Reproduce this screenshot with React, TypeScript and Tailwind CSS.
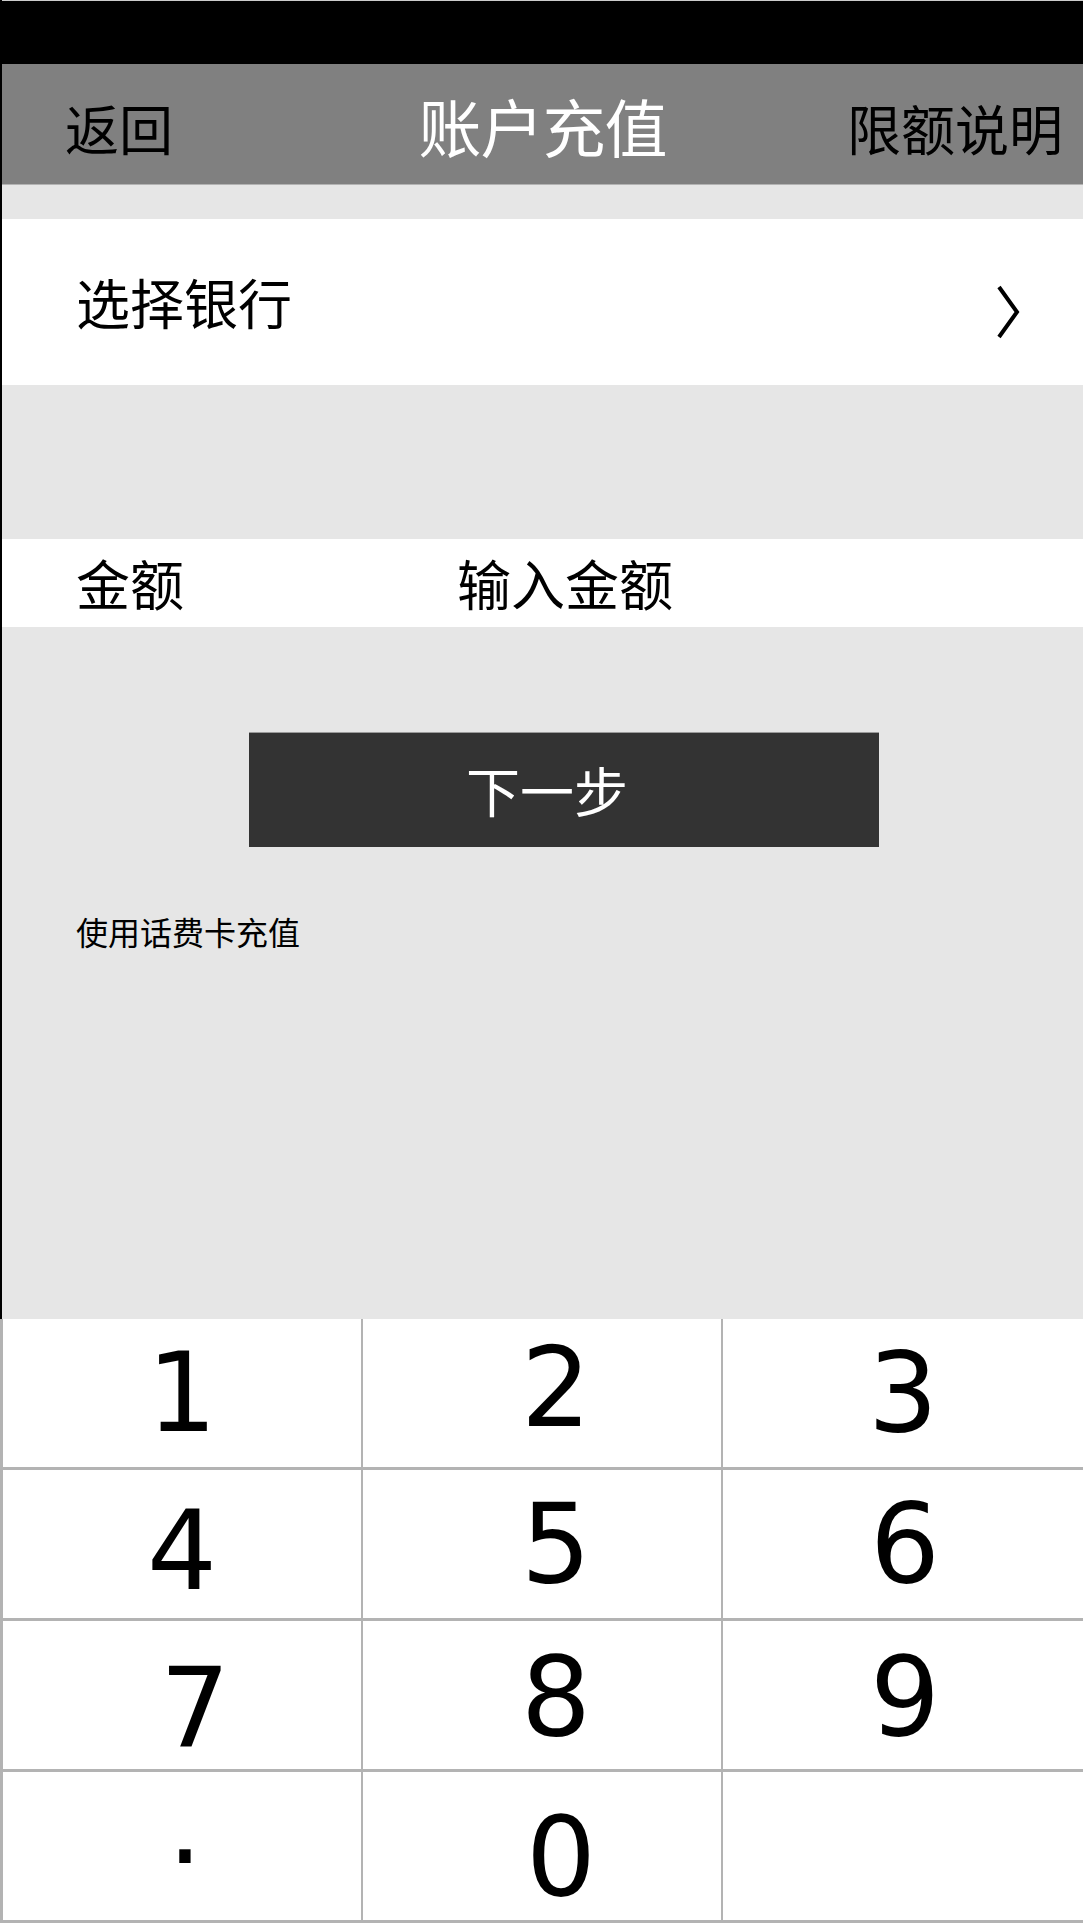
import React from "react";

const keys = [
  { label: "1", className: "" },
  { label: "2", className: "pl-[28px] pb-[10px]" },
  { label: "3", className: "" },
  { label: "4", className: "pt-[14px]" },
  { label: "5", className: "pl-[28px]" },
  { label: "6", className: "pl-[4px]" },
  { label: "7", className: "pl-[26px] pt-[28px]" },
  { label: "8", className: "pl-[28px] pt-[4px]" },
  { label: "9", className: "pl-[4px] pt-[4px]" },
  { label: ".", className: "pl-[6px] pb-[42px]" },
  { label: "0", className: "pl-[38px] pt-[22px]" },
  { label: "", className: "" },
];

const Chevron = () => (
  <svg width="26" height="54" viewBox="0 0 26 54" fill="none">
    <polyline
      points="4,2 22,27 4,52"
      stroke="#000"
      strokeWidth="4"
      strokeLinejoin="miter"
    />
  </svg>
);

const App = () => {
  return (
    <div className="w-[1083px] h-[1923px] flex flex-col bg-[#e6e6e6] font-['Noto_Sans_CJK_SC','Noto_Sans',sans-serif] overflow-hidden">
      <div className="flex flex-col flex-1 border-l-2 border-black">
        {/* status bar */}
        <div className="h-[64px] bg-black border-t border-[#cccccc]" />

        {/* header */}
        <div className="h-[121px] bg-[#808080] border-b border-[#b3b3b3] grid grid-cols-[1fr_auto_1fr] items-center px-[20px]">
          <span className="text-[54px] leading-none text-black pl-[43px] pt-[8px]">返回</span>
          <span className="text-[63px] leading-none text-white tracking-[-1px]">账户充值</span>
          <span className="text-[54px] leading-none text-black text-right pt-[8px]">限额说明</span>
        </div>

        <div className="h-[34px]" />

        {/* bank row */}
        <div className="h-[166px] bg-white flex items-center justify-between pl-[74px] pr-[62px]">
          <span className="text-[54px] leading-none text-black">选择银行</span>
          <div className="pt-[20px]">
            <Chevron />
          </div>
        </div>

        <div className="h-[154px]" />

        {/* amount row */}
        <div className="h-[88px] bg-white flex items-center pl-[74px]">
          <span className="w-[381px] text-[54px] leading-none text-black">金额</span>
          <span className="text-[54px] leading-none text-black">输入金额</span>
        </div>

        {/* actions */}
        <div className="flex-1 flex flex-col">
          <button
            type="button"
            className="mt-[105px] ml-[247px] w-[630px] h-[115px] bg-[#333333] border-t border-[#9a9a9a] flex items-center justify-center pr-[34px] text-[54px] leading-none text-white"
          >
            下一步
          </button>
          <span className="mt-[68px] ml-[74px] text-[32px] leading-none text-black">
            使用话费卡充值
          </span>
        </div>
      </div>

      {/* keypad */}
      <div className="bg-[#b3b3b3] border-l-[3px] border-[#b3b3b3] pb-[3px] grid grid-cols-[358px_358px_1fr] auto-rows-[148px] gap-x-[2px] gap-y-[3px]">
        {keys.map((k, i) => (
          <div
            key={i}
            className={`bg-white flex items-center justify-center font-['DejaVu_Sans',sans-serif] text-[110px] leading-none text-black ${k.className}`}
          >
            {k.label}
          </div>
        ))}
      </div>
    </div>
  );
};

export default App;
